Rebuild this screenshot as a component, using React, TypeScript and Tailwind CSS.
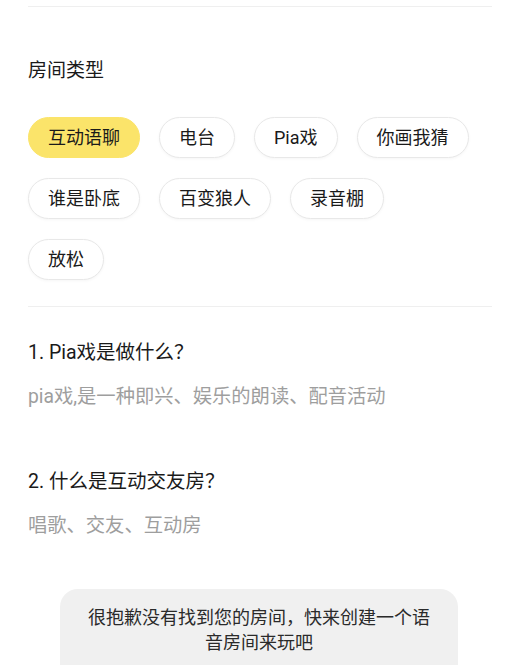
const roomTypes = ["互动语聊", "电台", "Pia戏", "你画我猜", "谁是卧底", "百变狼人", "录音棚", "放松"]

const faqs = [
  { q: "1. Pia戏是做什么？", a: "pia戏,是一种即兴、娱乐的朗读、配音活动" },
  { q: "2. 什么是互动交友房？", a: "唱歌、交友、互动房" },
]

export default function App() {
  const selected = "互动语聊"

  return (
    <div
      className="relative min-h-[665px] bg-white pl-[28px] pr-[18px] pt-[6px] text-[#1a1a1a]"
      style={{ fontFamily: 'Roboto, "Noto Sans CJK SC", sans-serif' }}
    >
      <div className="h-px bg-[#efefef]" />

      {/* Room type */}
      <div className="mt-[51px] text-[19px] leading-[26px]">房间类型</div>
      <div className="mt-[33px] flex w-[446px] flex-wrap gap-x-[19px] gap-y-[20px]">
        {roomTypes.map((t) => (
          <div
            key={t}
            className={
              t === selected
                ? "flex h-[41px] items-center rounded-full border border-[#fbe46a] bg-[#fbe46a] px-[19px] text-[18px] text-[#1a1a1a]"
                : "flex h-[41px] items-center rounded-full border border-[#e8e8e8] bg-white px-[19px] text-[18px] text-[#1a1a1a] shadow-[0_1px_3px_rgba(0,0,0,0.04)]"
            }
          >
            {t}
          </div>
        ))}
      </div>

      <div className="mt-[26px] h-px bg-[#efefef]" />

      {/* FAQ */}
      <div className="pt-[33px]">
        {faqs.map((f, i) => (
          <div key={f.q} className={i > 0 ? "mt-[59px]" : ""}>
            <div className="text-[19.5px] leading-[26px] text-[#1a1a1a]">{f.q}</div>
            <div className="mt-[18px] text-[19.3px] leading-[26px] text-[#9e9e9e]">{f.a}</div>
          </div>
        ))}
      </div>

      {/* Toast */}
      <div className="fixed left-[60px] top-[589px] h-[100px] w-[398px] rounded-[18px] bg-[#f0f0f0] px-[24px] pt-[16px] text-center text-[18px] leading-[25px] text-[#2a2a2a]">
        很抱歉没有找到您的房间，快来创建一个语音房间来玩吧
      </div>
    </div>
  )
}
